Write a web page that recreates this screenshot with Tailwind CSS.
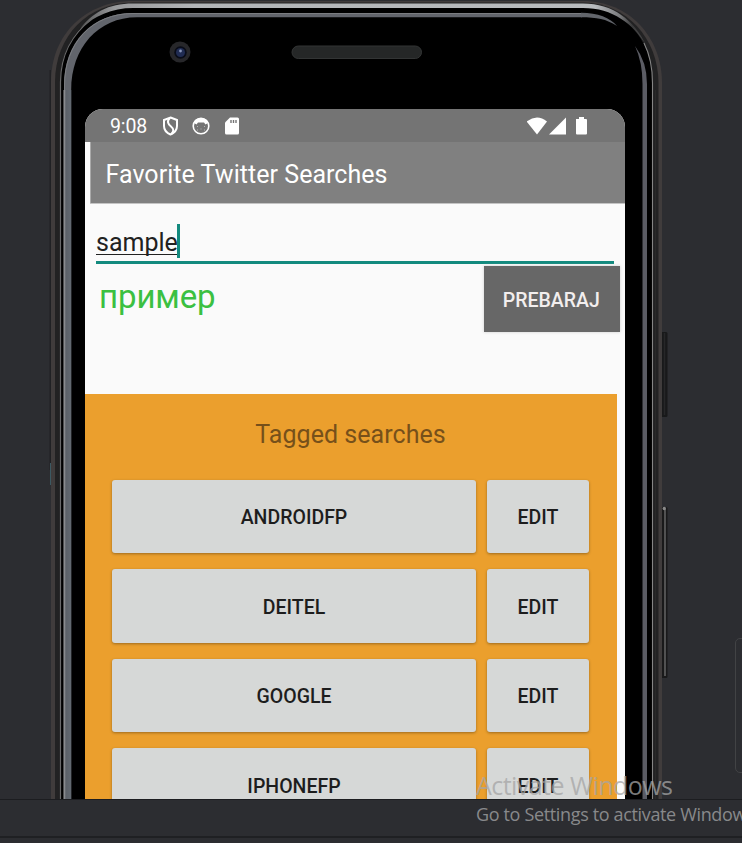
<!DOCTYPE html>
<html lang="en">
<head>
<meta charset="utf-8">
<title>Favorite Twitter Searches</title>
<script src="https://cdn.jsdelivr.net/npm/@tailwindcss/browser@4"></script>
</head>
<body class="bg-[#2c2d31]">
<div class="relative w-[742px] h-[843px] overflow-hidden flex flex-col bg-[#2c2d31] font-['Roboto',sans-serif]">
  <main class="relative h-[799px] shrink-0 overflow-hidden pt-[109px] pl-[85px]">
    <!-- device frame -->
    <svg class="absolute inset-0" width="742" height="799" viewBox="0 0 742 799" fill="none">
      <defs>
        <linearGradient id="rim" x1="80" x2="652" y1="0" y2="0" gradientUnits="userSpaceOnUse">
          <stop offset="0" stop-color="#555"/><stop offset=".06" stop-color="#98999b"/><stop offset=".2" stop-color="#b2b5b8"/><stop offset=".9" stop-color="#b8bbbe"/><stop offset=".945" stop-color="#77787a"/><stop offset=".965" stop-color="#3a3a3b"/><stop offset="1" stop-color="#555"/>
        </linearGradient>
        <linearGradient id="band" x1="64" x2="71.500" y1="0" y2="0" gradientUnits="userSpaceOnUse">
          <stop offset="0" stop-color="#9a9b9d"/><stop offset=".25" stop-color="#5c6168"/><stop offset="1" stop-color="#636a72"/>
        </linearGradient>
      </defs>
      <rect x="49.500" y="70" width="1.500" height="400" fill="#202124"/>
      <rect x="50" y="463" width="1.500" height="22" fill="#3c5962"/>
      <rect x="661" y="332" width="6.500" height="85" rx="1.500" fill="#18191a"/>
      <path d="M664.500 333V415" stroke="#262728" stroke-width="1.500"/>
      <rect x="661" y="507" width="6.500" height="171" rx="1.500" fill="#19191a"/>
      <path d="M665 509V676" stroke="#5d5d5d" stroke-width="1.700"/>
      <circle cx="664.300" cy="508.500" r="1.700" fill="#898989"/>
      <path d="M51 850V82C51 34 86 1 133 1H583C629 1 662 37 662 83V850Z" fill="#403c3c"/>
      <path d="M55 850V82C55 36 88 2.500 133 2.500H583C626 3 658.500 38 658.500 83V850Z" fill="#222223"/>
      <path d="M60 850V82C60 42 90 5 131 5H581C622 6 652.500 38 652.500 82V850Z" fill="#000"/>
      <path d="M60.500 850V82C60.500 56 72 34 92 19" stroke="#6a6a6b" stroke-width="1.200"/>
      <path d="M80 29C92 13 108 3.500 133 3.500H583C613 3.500 634 20 646 45C633 24 613 8 583 8H133C112 8 94 16 80 29Z" fill="url(#rim)"/>
      <path d="M644 43Q652.500 60 652.500 83V850" stroke="#858585" stroke-width="1.100"/>
      <path d="M64 850V86C64 42 92 13 133 13H582V17.300H137C98 17.300 71.200 48 71.200 90V850Z" fill="#62656c"/>
      <path d="M63.500 90H71.200V850H63.500Z" fill="url(#band)"/>
      <path d="M64.500 90V86C64.500 43 92 13.500 133 13.500H582" stroke="#7b7d81"/>
      <path d="M581 12.800C598 12.800 610 18 617 26C606 19 597 17.300 581 17.300Z" fill="#62656b"/>
      <path d="M635 46Q647 62 647 84V850H642.500V84Q642.500 62 635 46Z" fill="#5b5c64"/>
      <path d="M655.500 90V850" stroke="#292929"/>
      <circle cx="180" cy="52" r="10.500" fill="#27272a"/>
      <circle cx="180.500" cy="52.500" r="6.200" fill="#090c18"/>
      <circle cx="180.500" cy="52.500" r="4.500" fill="#202c53"/>
      <circle cx="180.500" cy="51" r="1.400" fill="#8794b8"/>
      <rect x="292" y="46" width="129.500" height="12.500" rx="6.250" fill="#252727" stroke="#333535"/>
    </svg>

    <section class="relative w-[540px] h-[690px] overflow-hidden rounded-t-[18px] bg-[#fafafa] flex flex-col">
      <header class="h-[33px] shrink-0 bg-[#747474] flex items-center text-white pl-[25px] pr-[38px]">
        <span class="w-[52px] text-[19.5px] leading-[33px] pt-[2px] tracking-[-0.1px]">9:08</span>
        <svg width="17" height="20" viewBox="0 0 17 20" fill="none" stroke="white" stroke-width="2"><path d="M8.500 1.500L15 4V10C15 14 12 17 8.500 18.500C5 17 2 14 2 10V4Z"/><path d="M8 2C4.500 5 6 8 9 10.500C12 13 12 15 9.500 18"/></svg>
        <svg class="ml-[13px]" width="18" height="18" viewBox="0 0 18 18"><circle cx="9" cy="9" r="7.800" fill="#747474" stroke="white" stroke-width="1.600"/><path d="M2 6Q2.500 1.500 9 1Q15.500 1.500 16 6L13.500 7.500L12 5.500H6L4.500 7.500Z" fill="white"/><path d="M5 9.500H6M12 9.500H13M5 13H6M8.500 12H9.500M12 13H13" stroke="#b5b5b5"/></svg>
        <svg class="ml-[15px]" width="14" height="18" viewBox="0 0 14 18"><path d="M5 .5H12.500Q14 .5 14 2V16Q14 17.500 12.500 17.500H1.500Q0 17.500 0 16V5.500Z" fill="white"/><path d="M6 3V6M8.500 3V6M11 3V6" stroke="#747474" stroke-width="1.400"/></svg>
        <svg class="ml-auto" width="60" height="20" viewBox="0 0 60 20" fill="white"><path d="M-.5 5.500Q10.200-2.500 20 5.500L10 18.500Z"/><path d="M22 18.500L39 1.500V18.500Z"/><path d="M49 3H52V1H57V3H59Q60 3 60 4V17.500Q60 18.500 59 18.500H50Q49 18.500 49 17.500Z"/></svg>
      </header>
      <h1 class="ml-[5px] h-[61px] shrink-0 bg-[#808080] text-white text-[25px] leading-[62px] pl-[14.5px] pt-[1px] border-l border-[#aaa] shadow-[0_1px_0_#c4c4c4]"><span class="relative top-px tracking-[0.04px]">Favorite Twitter Searches</span></h1>
      <div class="ml-[11px] w-[518px] mt-[21px] h-[40px] shrink-0 border-b-[3px] border-[#138a7e] flex items-start text-[#212121]">
        <span class="text-[25px] leading-[34px] pt-[2px] underline decoration-[1px] underline-offset-[3px]" style="text-decoration-skip-ink:none">sample</span><i class="block w-[3px] h-[34px] -ml-[0.5px] bg-[#138a7e]"></i>
      </div>
      <div class="h-[130px] shrink-0 flex justify-between items-start pl-[14px] pr-[5.5px] pt-[2px]">
        <span class="text-[33px] leading-[40px] text-[#3bc041] pt-[11px] tracking-[-0.1px]">пример</span>
        <button class="w-[135.5px] h-[66px] bg-[#676767] text-[#f2eeee] text-[19.5px] font-medium pt-[3px] pr-px shadow-[0_0_3px_#ccc]">PREBARAJ</button>
      </div>
      <div class="w-[531.5px] h-[406px] shrink-0 bg-[#eb9f2d] overflow-hidden pl-[27px]">
        <h2 class="w-[477px] text-center text-[25px] leading-[30px] pt-[26px] h-[85.5px] text-[#76501a] tracking-[0.05px]">Tagged searches</h2>
        <div class="grid grid-cols-[364px_102px] gap-x-[11px] gap-y-[16px] auto-rows-[73.5px] text-[19.5px] font-medium text-[#1d1d1d]">
          <button class="rounded-[3px] bg-[#d6d8d7] shadow-[0_1px_3px_#00000055] pt-[3px]">ANDROIDFP</button>
          <button class="rounded-[3px] bg-[#d6d8d7] shadow-[0_1px_3px_#00000055] pt-[3px]">EDIT</button>
          <button class="rounded-[3px] bg-[#d6d8d7] shadow-[0_1px_3px_#00000055] pt-[3px]">DEITEL</button>
          <button class="rounded-[3px] bg-[#d6d8d7] shadow-[0_1px_3px_#00000055] pt-[3px]">EDIT</button>
          <button class="rounded-[3px] bg-[#d6d8d7] shadow-[0_1px_3px_#00000055] pt-[3px]">GOOGLE</button>
          <button class="rounded-[3px] bg-[#d6d8d7] shadow-[0_1px_3px_#00000055] pt-[3px]">EDIT</button>
          <button class="rounded-[3px] bg-[#d6d8d7] shadow-[0_1px_3px_#00000055] pt-[3px]">IPHONEFP</button>
          <button class="rounded-[3px] bg-[#d6d8d7] shadow-[0_1px_3px_#00000055] pt-[3px]">EDIT</button>
        </div>
      </div>
    </section>
    <div class="absolute left-[735px] top-[638px] w-[20px] h-[135px] rounded-[5px] border border-[#424345]"></div>
  </main>
  <footer class="flex-1 border-t border-[#1c1d20] bg-[#2c2d31] pt-[36px]"><div class="h-[2px] bg-[#1f2023]"></div></footer>
  <aside class="absolute left-[476px] top-[769px] whitespace-nowrap font-['Open_Sans',sans-serif]">
    <p class="text-[25px] leading-[32px] text-[#a5a5a5]/75 tracking-[-0.55px]">Activate Windows</p>
    <p class="text-[18px] leading-[26px] text-[#88898b] tracking-[-0.35px]">Go to Settings to activate Windows.</p>
  </aside>
</div>
</body>
</html>
